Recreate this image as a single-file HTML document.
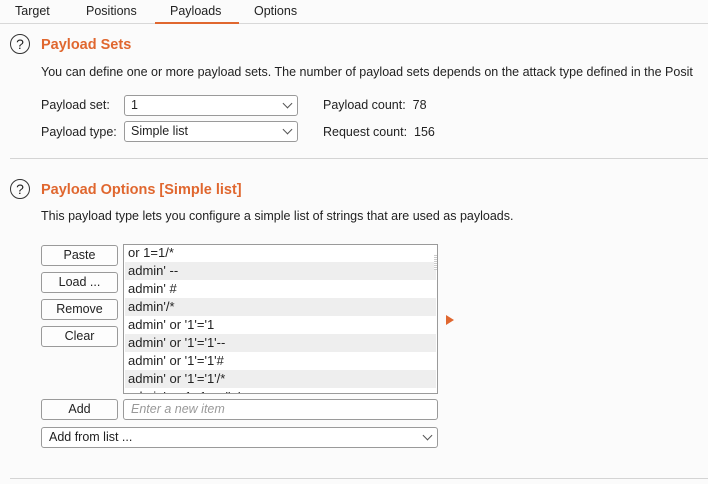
<!DOCTYPE html>
<html><head><style>
body{margin:0;width:708px;height:484px;background:#fbfbfb;font-family:"Liberation Sans","DejaVu Sans",sans-serif;font-size:12.5px;color:#222;position:relative;overflow:hidden}
.a{position:absolute;white-space:nowrap}
.tab{top:4px}
.help{width:18px;height:18px;border:1.3px solid #333;border-radius:50%;text-align:center;line-height:18px;font-size:14px}
.title{color:#e0672f;font-weight:bold;font-size:14.5px}
.box{border:1px solid #9a9a9a;border-radius:3px;background:#fff;box-sizing:border-box}
.btn{border:1px solid #9a9a9a;border-radius:3px;background:#fdfdfd;box-sizing:border-box;width:77px;height:21px;text-align:center;line-height:19px}
.chev{position:absolute;right:6px;top:4px;width:6px;height:6px;border-right:1.2px solid #555;border-bottom:1.2px solid #555;transform:rotate(45deg)}
.row{position:absolute;left:1px;width:308px;height:18px;line-height:18px;padding-left:3px;font-size:13px}
.sh{background:#eeeeee}
</style></head><body>
<div class="a tab" style="left:15px">Target</div>
<div class="a tab" style="left:86px">Positions</div>
<div class="a tab" style="left:170px">Payloads</div>
<div class="a tab" style="left:254px">Options</div>
<div class="a" style="left:0;top:23px;width:708px;height:1px;background:#d8d8d8"></div>
<div class="a" style="left:155px;top:22px;width:84px;height:2px;background:#e0672f"></div>

<div class="a help" style="left:10px;top:34px">?</div>
<div class="a title" style="left:41px;top:37px">Payload Sets</div>
<div class="a" style="left:41px;top:65px">You can define one or more payload sets. The number of payload sets depends on the attack type defined in the Posit</div>
<div class="a" style="left:41px;top:98px">Payload set:</div>
<div class="a box" style="left:124px;top:95px;width:174px;height:21px;padding:2px 6px">1<div class="chev"></div></div>
<div class="a" style="left:41px;top:125px">Payload type:</div>
<div class="a box" style="left:124px;top:121px;width:174px;height:21px;padding:2px 6px">Simple list<div class="chev"></div></div>
<div class="a" style="left:323px;top:98px">Payload count:&nbsp; 78</div>
<div class="a" style="left:323px;top:125px">Request count:&nbsp; 156</div>
<div class="a" style="left:10px;top:158px;width:698px;height:1px;background:#d4d4d4"></div>

<div class="a help" style="left:10px;top:179px">?</div>
<div class="a title" style="left:41px;top:182px">Payload Options [Simple list]</div>
<div class="a" style="left:41px;top:209px">This payload type lets you configure a simple list of strings that are used as payloads.</div>

<div class="a btn" style="left:41px;top:245px">Paste</div>
<div class="a btn" style="left:41px;top:272px">Load ...</div>
<div class="a btn" style="left:41px;top:299px">Remove</div>
<div class="a btn" style="left:41px;top:326px">Clear</div>

<div class="a" style="left:123px;top:244px;width:315px;height:150px;border:1px solid #9a9a9a;background:#fff;box-sizing:border-box;overflow:hidden">
<div class="row" style="top:-1px">or 1=1/*</div>
<div class="row sh" style="top:17px">admin' --</div>
<div class="row" style="top:35px">admin' #</div>
<div class="row sh" style="top:53px">admin'/*</div>
<div class="row" style="top:71px">admin' or '1'='1</div>
<div class="row sh" style="top:89px">admin' or '1'='1'--</div>
<div class="row" style="top:107px">admin' or '1'='1'#</div>
<div class="row sh" style="top:125px">admin' or '1'='1'/*</div>
<div class="row" style="top:143px">admin' or 1=1 or ''='</div>
<div style="position:absolute;left:310px;top:10px;width:4px;height:15px;background:repeating-linear-gradient(#ccc 0 1px,#fff 1px 2px)"></div>
</div>
<div class="a" style="left:446px;top:315px;width:0;height:0;border-left:8px solid #e0672f;border-top:5px solid transparent;border-bottom:5px solid transparent"></div>

<div class="a btn" style="left:41px;top:399px">Add</div>
<div class="a box" style="left:123px;top:399px;width:315px;height:21px;padding:2px 7px;color:#999;font-style:italic">Enter a new item</div>
<div class="a box" style="left:41px;top:427px;width:397px;height:21px;padding:2px 7px">Add from list ...<div class="chev"></div></div>
<div class="a" style="left:10px;top:478px;width:698px;height:1px;background:#d4d4d4"></div>
</body></html>
